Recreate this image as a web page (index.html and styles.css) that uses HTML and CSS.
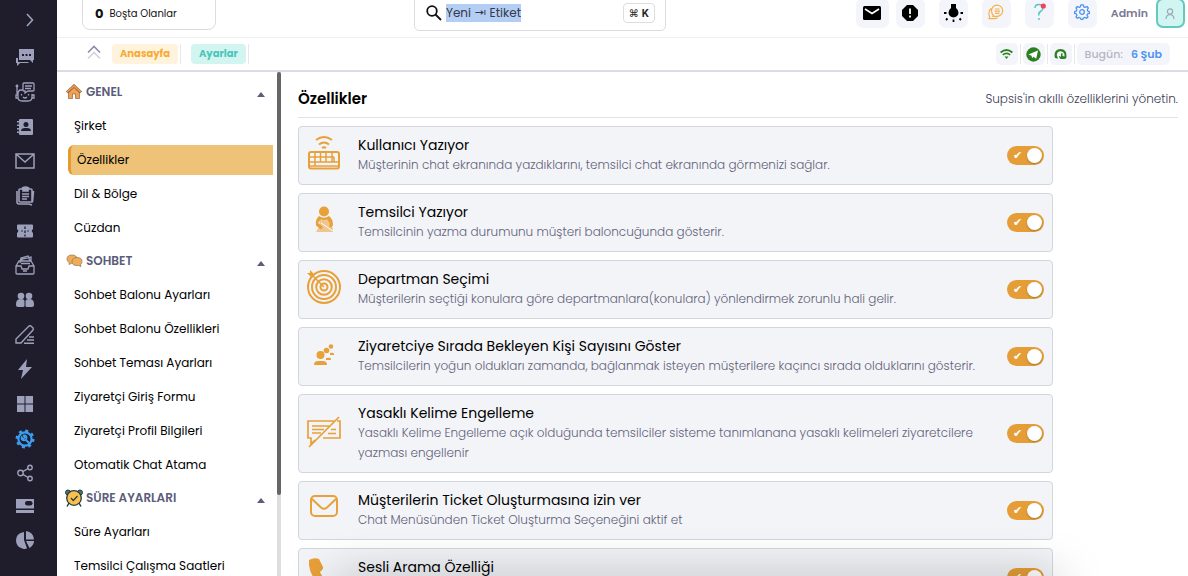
FILE: index.html
```html
<!DOCTYPE html>
<html lang="tr">
<head>
<meta charset="utf-8">
<title>Özellikler</title>
<link rel="stylesheet" href="styles.css">
</head>
<body>
<div class="app">
  <nav class="rail" aria-label="Ana menü">
    <button class="rail-toggle" aria-label="Genişlet"><svg width="10" height="14" viewBox="0 0 10 14" fill="none" stroke="currentColor" stroke-width="1.600"><path d="M2 1l5.500 6L2 13"/></svg></button>
    <a href="#" aria-label="Sohbetler"><svg viewBox="0 0 20 20"><path fill="currentColor" d="M4 2h15v11h-1v3l-3-3H4zM1 11h2v4h10l1 1H5l-3 3v-3H1z"/><path fill="#1f1d2b" d="M7 7h2v2H7zm3.500 0h2v2h-2zm3.500 0h2v2h-2z"/></svg></a>
    <a href="#" aria-label="Bot"><svg viewBox="0 0 20 20" fill="none" stroke="currentColor" stroke-width="1.300"><path d="M8 8H6q-3 0-3 4v3q0 4 4 4h6q4 0 4-4v-3M3 13H1v3h2M17 13h2v3h-2M2 12V4M9 1h9q1 0 1 1v6q0 1-1 1h-5l-3 2V9H9q-1 0-1-1V2q0-1 1-1zM10 4h7M10 6.500h6M8 15q2 2 4 0M6.500 12v1.500M13.500 12v1.500"/><circle cx="2" cy="4" r=".8"/></svg></a>
    <a href="#" aria-label="Kişiler"><svg viewBox="0 0 20 20"><path fill="currentColor" d="M5 2h12q1 0 1 1v14q0 1-1 1H5q-1 0-1-1V3q0-1 1-1zM2 4h3v1.500H2zm0 3.500h3V9H2zM2 11h3v1.500H2zm0 3.500h3V16H2z"/><circle cx="11" cy="7.500" r="2.500" fill="#1f1d2b"/><path fill="#1f1d2b" d="M6 14q0-3 4-3h2q4 0 4 3z"/></svg></a>
    <a href="#" aria-label="E-posta"><svg viewBox="0 0 20 20" fill="none" stroke="currentColor" stroke-width="1.500"><path d="M1 3h18v14H1zM1 3l9 8 9-8"/></svg></a>
    <a href="#" aria-label="Notlar"><svg viewBox="0 0 20 20" fill="none" stroke="currentColor" stroke-width="1.600"><path d="M5 3h11q1 0 1 1v12H5q-1 0-1-1V4q0-1 1-1zM7.500 3V2q3-2 6 0v1M7 8h7M7 10.500h7M7 13h5M2 5v11q0 2 2 2h10l3 1M18.500 5l-1 11"/><path fill="currentColor" d="M8 2h5v3H8z"/></svg></a>
    <a href="#" aria-label="Biletler"><svg viewBox="0 0 20 20"><path fill="currentColor" d="M3 3.500h14q1 0 1 1V8q-2.500 2 0 4v3.500q0 1-1 1H3q-1 0-1-1V12q2.500-2 0-4V4.500q0-1 1-1z"/><path stroke="#1f1d2b" stroke-width="1.300" stroke-dasharray="2.500 1.500" d="M10 5.500v10"/><path stroke="#1f1d2b" stroke-width=".8" d="M6 10h2M12 10h2"/></svg></a>
    <a href="#" aria-label="Arşiv"><svg viewBox="0 0 20 20" fill="none" stroke="currentColor" stroke-width="1.300"><path d="M1 11h5l1 3h6l1-3h5v7q0 1-1 1H2q-1 0-1-1zM1 11l3-5h12l3 5M5 8l1-5 7-2 2 5M7 6V4l9-2v4M6 8.500h9M8 16h4"/></svg></a>
    <a href="#" aria-label="Ekip"><svg viewBox="0 0 20 20" fill="currentColor"><circle cx="6" cy="6" r="3.300"/><circle cx="14" cy="6" r="3.300"/><path d="M1 14q0-5 5-5 3 0 4 2 1-2 4-2 5 0 5 5v1q0 2-2 2h-5q-1 0-2-1-1 1-2 1H3q-2 0-2-2z"/><path stroke="#1f1d2b" d="M10 10v7"/></svg></a>
    <a href="#" aria-label="Düzenle"><svg viewBox="0 0 20 20" fill="none" stroke="currentColor" stroke-width="1.400"><path d="M1 18v-4L14 1q1-.5 2 0l2 2q.500 1 0 2L6 18zM14 12h5M12 15h7M9 18.300h10"/></svg></a>
    <a href="#" aria-label="Hızlı yanıt"><svg viewBox="0 0 20 20" fill="currentColor"><path d="M12 0L3 11h5l-2 9 11-12h-6z"/></svg></a>
    <a href="#" aria-label="Uygulamalar"><svg viewBox="0 0 20 20" fill="currentColor"><path d="M2 2h7.500v7.500H2zm8.500 0H18v7.500h-7.500zM2 10.500h7.500V18H2zm8.500 0H18V18h-7.500z"/></svg></a>
    <a href="#" class="current" aria-label="Ayarlar"><svg viewBox="0 0 20 20" fill="none" stroke="currentColor"><circle cx="10" cy="10" r="6.600" stroke-width="2.200"/><circle cx="10" cy="10" r="8.300" stroke-width="2.400" stroke-dasharray="3 3.520"/><path stroke-width="2" d="M10.500 10.500l4.500 4.500"/><path stroke-width="1.600" d="M8 6.500l2 2-1.500 1.500-2-2q-.5 3 2 3.500 4 0 3-4-1-1.500-3.500-1"/></svg></a>
    <a href="#" aria-label="Paylaş"><svg viewBox="0 0 20 20" fill="none" stroke="currentColor" stroke-width="1.400"><circle cx="5.500" cy="10" r="2.700"/><circle cx="15" cy="4.500" r="2.200"/><circle cx="15" cy="15.500" r="2.200"/><path d="M7.800 8.700l5.300-3.200M7.800 11.300l5.300 3.200"/></svg></a>
    <a href="#" class="short" aria-label="Ödeme"><svg viewBox="0 0 20 20"><path fill="currentColor" d="M1 3h18v9.500H1zM1 14h18v3H1z"/><rect x="10" y="5" width="7.500" height="4.500" rx="2.200" fill="#1f1d2b"/></svg></a>
    <a href="#" aria-label="Raporlar"><svg viewBox="0 0 20 20" fill="currentColor"><path d="M9 2v8l3 8.500q-2 .8-4 .3Q1 17 1 10.500 1 3 9 2zM11 1q7.500 1 8 8.500h-8zM11 11h8q0 4-4.500 7z"/></svg></a>
  </nav>

  <div class="shell">
    <header class="topbar">
      <div class="idle"><b>0</b> Boşta Olanlar</div>
      <label class="search">
        <svg width="16" height="16" viewBox="0 0 16 16" fill="none" stroke="#111" stroke-width="1.800"><circle cx="6" cy="6" r="4.800"/><path d="M9.500 9.500l5.500 5.500"/></svg>
        <input type="text" aria-label="Ara" value="Yeni ⇥ Etiket">
        <kbd>⌘ <b>K</b></kbd>
      </label>
      <div class="tools">
        <button class="wide" aria-label="Mesajlar"><svg width="18" height="14" viewBox="0 0 18 14"><rect width="18" height="14" rx="1.500"/><path d="M2 3l7 4.500L16 3" fill="none" stroke="#fff" stroke-width="1.600"/></svg></button>
        <button aria-label="Uyarılar"><svg width="16" height="16" viewBox="0 0 16 16"><path d="M5 0h6l5 5v6l-5 5H5l-5-5V5z"/><path d="M8 3.500v5.500M8 10.500v2" stroke="#fff" stroke-width="1.800"/></svg></button>
        <button aria-label="Tema"><svg width="19" height="18" viewBox="0 0 19 18"><path d="M7 0h5v4q2.500 2 2.500 4.500a5 5 0 0 1-10 0Q4.500 6 7 4z"/><path d="M0 9h2.500M16.500 9H19M9.500 15.500V18M3.500 14.500L2 16M15.500 14.500L17 16" stroke="#000" stroke-width="1.800"/></svg></button>
        <button class="raised" aria-label="Sohbet"><svg width="16" height="16" viewBox="0 0 16 16" fill="none" stroke="#f5b04c" stroke-width="1.200" stroke-linejoin="round"><path d="M5.500 11.500Q3.500 9.500 3.500 7a5.600 5.600 0 1 1 5.600 5.300H4.800zM3 4.500Q.8 6.500.8 9.500q0 1.500.9 2.800L1 14.600h5.500q2 0 3-.8M7 5h4.500M6.500 7.200h5.500M7 9.400h4.500"/></svg></button>
        <button class="raised" aria-label="Yardım"><svg width="14" height="18" viewBox="0 0 14 18" fill="none"><path d="M3 5q0-3.500 4-3.500t4 3.500q0 2-2.500 3.500T7 12.500" stroke="#4fc9be" stroke-width="1.500"/><circle cx="7" cy="16" r="1" fill="#4fc9be"/><circle cx="11.300" cy="3" r="2.600" fill="#ef4458"/></svg></button>
        <button class="raised" aria-label="Ayarlar"><svg width="16" height="16" viewBox="0 0 16 16" fill="none" stroke="#4b94f0" stroke-width="1.300"><circle cx="8" cy="8" r="2.300"/><path stroke-linejoin="round" d="M6.800.8h2.400l.6 2 1.300.6L13 2.500 14.300 4l-1 1.800.5 1.300 1.600.5v1.800l-1.800.5-.6 1.300L14 13l-1.500 1.300-1.700-.9-1.400.6-.5 1.400H7.100L6.500 14l-1.400-.6-1.700.9L2 13l.9-1.800-.6-1.300-1.700-.5V7.600l1.700-.5.6-1.300L2 4l1.300-1.500 1.800.9 1.200-.6z"/></svg></button>
        <span class="user">Admin</span>
        <button class="avatar" aria-label="Profil"><svg width="10" height="11" viewBox="0 0 10 11" fill="none" stroke="#9aa9b5" stroke-width="1.200"><circle cx="5" cy="3.500" r="2.600"/><path d="M1 11q0-4 4-4.500 4 .5 4 4.500"/></svg></button>
      </div>
    </header>

    <div class="crumbbar">
      <button class="collapse" aria-label="Daralt"><svg width="14" height="15" viewBox="0 0 14 15" fill="none" stroke-width="1.600"><path d="M1 7.500L7 1.500l6 6" stroke="#8c8cae"/><path d="M1 13.500l6-6 6 6" stroke="#d3d3de"/></svg></button>
      <a href="#" class="crumb home">Anasayfa</a>
      <i class="sep"></i>
      <a href="#" class="crumb page">Ayarlar</a>
      <i class="sep"></i>
      <div class="status">
        <span class="chip"><svg width="13" height="10" viewBox="0 0 13 10" fill="none" stroke="#2d8022" stroke-width="1.700"><path d="M.6 3.500q5.900-5 11.800 0M2.800 5.800q3.700-3 7.400 0"/><path d="M4.500 7.500h4L6.500 10z" fill="#2d8022" stroke="none"/></svg></span>
        <i class="sep"></i>
        <span class="chip"><svg width="15" height="15" viewBox="0 0 15 15"><circle cx="7.500" cy="7.500" r="7.200" fill="#2d8022"/><path d="M2.500 7.500L12 3.500l-1.800 8.300-2.800-2-1.300 1.500-.5-2.600z" fill="#fff"/></svg></span>
        <i class="sep"></i>
        <span class="chip"><svg width="13" height="12" viewBox="0 0 13 12" fill="#2d8022"><path d="M.5 8.500Q0 1 6.500 1t6 7.500q0 2.500-2.500 2.500H6.500L4.800 8.800l1-.8 1.200 1V5.500l1.500-.2V8l2 .5Q11 3.500 6.500 3.300 3 3.500 2.800 7L4 10.500Q.7 11 .5 8.500z"/></svg></span>
        <i class="sep"></i>
        <span class="today">Bugün: <b>6 Şub</b></span>
      </div>
    </div>

    <div class="body">
      <nav class="menu" aria-label="Ayarlar menüsü">
        <section>
          <button class="group"><svg viewBox="0 0 18 16"><path d="M3.500 8L9 3l5.500 5v6.500h-4V10h-3v4.500h-4z" fill="#f2a154" stroke="#8d6148" stroke-width=".7"/><path d="M2 8.500L9 2l7 6.500" fill="none" stroke="#7b5a48" stroke-width="3"/><path d="M2 8.200L9 2l7 6.200" fill="none" stroke="#f0964a" stroke-width="1.700"/></svg>GENEL<i class="caret"></i></button>
          <a href="#">Şirket</a>
          <a href="#" class="active">Özellikler</a>
          <a href="#">Dil &amp; Bölge</a>
          <a href="#">Cüzdan</a>
        </section>
        <section>
          <button class="group"><svg viewBox="0 0 18 16" fill="#f0ac57" stroke="#8d7259" stroke-width=".7"><path d="M7 2q5 0 5 4t-5 4l-3 1.500.2-2Q2 8.500 2 6q0-4 5-4z"/><path d="M12 4.500q5 0 5 4 0 2-1.500 3l.5 2-2.500-1H12q-5 0-5-4t5-4z"/></svg>SOHBET<i class="caret"></i></button>
          <a href="#">Sohbet Balonu Ayarları</a>
          <a href="#">Sohbet Balonu Özellikleri</a>
          <a href="#">Sohbet Teması Ayarları</a>
          <a href="#">Ziyaretçi Giriş Formu</a>
          <a href="#">Ziyaretçi Profil Bilgileri</a>
          <a href="#">Otomatik Chat Atama</a>
        </section>
        <section>
          <button class="group"><svg class="clock" viewBox="0 0 18 18"><path d="M4 14l-2 3.500M14 14l2 3.500" stroke="#273b3d" stroke-width="1.500"/><circle cx="3" cy="3.500" r="2.500" fill="#4b7472" stroke="#273b3d"/><circle cx="15" cy="3.500" r="2.500" fill="#4b7472" stroke="#273b3d"/><circle cx="9" cy="9" r="7.300" fill="#f7c04f" stroke="#273b3d" stroke-width="1.300"/><path d="M6 9l2.300 2.500L12.500 7" fill="none" stroke="#273b3d" stroke-width="1.200"/></svg>SÜRE AYARLARI<i class="caret"></i></button>
          <a href="#">Süre Ayarları</a>
          <a href="#">Temsilci Çalışma Saatleri</a>
        </section>
      </nav>
      <div class="track"><div class="thumb"></div></div>

      <main class="content">
        <div class="heading"><h1>Özellikler</h1><p>Supsis'in akıllı özelliklerini yönetin.</p></div>
        <div class="cards">
          <div class="card">
            <svg viewBox="0 0 36 36" fill="none" stroke="#e8a038" stroke-width="2"><rect x="3" y="17" width="30" height="16.500" rx="2"/><path stroke-width="1.500" d="M3 22h25M3 27h25M9 17v14M14.500 17v10M20 17v10M26 17v10M28 22v5h5M3 31h30"/><path d="M10 5q8-6 16 0M13 9.500q5-4 10 0M16 13q2-1.500 4 0"/></svg>
            <div class="text"><h2 id="f1">Kullanıcı Yazıyor</h2><p>Müşterinin chat ekranında yazdıklarını, temsilci chat ekranında görmenizi sağlar.</p></div>
            <input type="checkbox" class="switch" aria-labelledby="f1" checked>
          </div>
          <div class="card">
            <svg viewBox="0 0 36 36" fill="#e8a038"><path fill="#efc68c" d="M14 17l9 0 4 10v3H10l3-5z"/><circle cx="18" cy="9.500" r="5"/><path d="M13 14q5 3.500 10 0 4 3 4 9l-2 3-2-2 1-2-3-5q-3 2-6 0l-3 4 5 4-2 2.500-5-4q-1-6 3-9.500z"/><path stroke="#fff" stroke-width="1" d="M15 21l12 8"/></svg>
            <div class="text"><h2 id="f2">Temsilci Yazıyor</h2><p>Temsilcinin yazma durumunu müşteri baloncuğunda gösterir.</p></div>
            <input type="checkbox" class="switch" aria-labelledby="f2" checked>
          </div>
          <div class="card">
            <svg viewBox="0 0 36 36" fill="none" stroke="#e8a038" stroke-width="2"><circle cx="18" cy="18" r="16"/><circle cx="18" cy="18" r="12"/><circle cx="18" cy="18" r="7.800"/><circle cx="18" cy="18" r="3.500"/><path stroke-width="1.500" d="M4 4l14 14"/><path fill="#e8a038" stroke="none" d="M1 4l3 0 0-3 4 4v3H5z"/></svg>
            <div class="text"><h2 id="f3">Departman Seçimi</h2><p>Müşterilerin seçtiği konulara göre departmanlara(konulara) yönlendirmek zorunlu hali gelir.</p></div>
            <input type="checkbox" class="switch" aria-labelledby="f3" checked>
          </div>
          <div class="card">
            <svg viewBox="0 0 36 36" fill="#e8a038"><circle cx="14.500" cy="19" r="4"/><path d="M8 29q0-4 4-4h5q4 0 4 4zM20 22q5-1 5 1v1h-5zM24 17q4-1 4 1v1h-4z"/><circle cx="20.500" cy="14.500" r="2.800"/><circle cx="25" cy="10.500" r="2.300"/></svg>
            <div class="text"><h2 id="f4">Ziyaretciye Sırada Bekleyen Kişi Sayısını Göster</h2><p>Temsilcilerin yoğun oldukları zamanda, bağlanmak isteyen müşterilere kaçıncı sırada olduklarını gösterir.</p></div>
            <input type="checkbox" class="switch" aria-labelledby="f4" checked>
          </div>
          <div class="card">
            <svg viewBox="0 0 36 36" fill="none" stroke="#e8a038" stroke-width="1.700"><path d="M28 8H2v17h3v6l4-4M31 8h3v17H17M6 13h15M6 16.500h12M6 20h9M25 16.500h5M23 13h-3M22 20.500h8M3 34L33 4"/></svg>
            <div class="text"><h2 id="f5">Yasaklı Kelime Engelleme</h2><p>Yasaklı Kelime Engelleme açık olduğunda temsilciler sisteme tanımlanana yasaklı kelimeleri ziyaretcilere yazması engellenir</p></div>
            <input type="checkbox" class="switch" aria-labelledby="f5" checked>
          </div>
          <div class="card">
            <svg viewBox="0 0 36 36" fill="none" stroke="#e8a038" stroke-width="2"><rect x="5" y="6" width="26" height="20" rx="4"/><path d="M6 9l9 8.500q3 2.500 6 0L30 9"/></svg>
            <div class="text"><h2 id="f6">Müşterilerin Ticket Oluşturmasına izin ver</h2><p>Chat Menüsünden Ticket Oluşturma Seçeneğini aktif et</p></div>
            <input type="checkbox" class="switch" aria-labelledby="f6" checked>
          </div>
          <div class="card">
            <svg viewBox="0 0 36 36" fill="#e8a038"><path d="M3 3q5-3 10-1l4 8q1 2-3 5 3 7 9 10 3-4 5-3l7 4q1 4-3 7-4 2-11-1Q5 24 3 8z"/></svg>
            <div class="text"><h2 id="f7">Sesli Arama Özelliği</h2><p>Sesli arama özelliğini aktif et</p></div>
            <input type="checkbox" class="switch" aria-labelledby="f7" checked>
          </div>
        </div>
      </main>
    </div>
  </div>
  <div class="fade"></div>
</div>
</body>
</html>
```

FILE: styles.css
```css
* { box-sizing: border-box; }
body { margin: 0; background: #fff; color: #111; font: 12px/20px Poppins, Inter, "Noto Sans", sans-serif; }
button, input { font: inherit; color: inherit; border: 0; padding: 0; background: none; }
a { color: inherit; text-decoration: none; }
h1, h2, p { margin: 0; }
svg { display: block; flex: none; }

.app { position: relative; display: flex; height: 100vh; overflow: hidden; }

.rail { flex: none; width: 57px; padding: 4px 7px 0 0; background: #1f1d2b; color: #9da0bb; display: flex; flex-direction: column; }
.rail a { display: flex; align-items: center; justify-content: center; flex: none; height: 35px; }
.rail a:nth-child(3n+2) { height: 34px; }
.rail a svg { width: 20px; height: 20px; }
.rail .current { color: #3d9ef0; }
.rail .short { height: 32px; }
.rail-toggle { display: flex; align-items: center; justify-content: center; flex: none; height: 36px; padding: 0 0 4px 9px; color: #9da0bb; }

.shell { flex: 1; min-width: 0; display: flex; flex-direction: column; }

.topbar { flex: none; display: flex; align-items: flex-end; justify-content: space-between; height: 38px; padding: 0 3px 6px 25px; border-bottom: 1px solid #efeff2; }
.idle { display: flex; align-items: center; gap: 6px; width: 134px; height: 44px; padding: 12px 12px 0; margin-bottom: 1px; border: 1px solid #dcdce0; border-radius: 8px; font-size: 10px; }
.idle b { font-size: 13px; }
.search { display: flex; align-items: center; width: 252px; height: 48px; padding: 12px 10px 0 11px; margin-left: 8px; border: 1px solid #dcdce0; border-radius: 5px; gap: 4px; }
.search input { width: 75px; height: 18px; background: #b4cdf4; color: #333a48; outline: 0; }
.search kbd { margin-left: auto; height: 20px; padding: 0 5px; border: 1px solid #dedee2; border-radius: 4px; font: 10px/18px Inter, "DejaVu Sans", sans-serif; color: #222; }
.tools { display: flex; align-items: flex-end; gap: 14px; margin-bottom: 3px; }
.tools button { display: flex; align-items: center; justify-content: center; width: 29px; height: 30px; border-radius: 7px; background: #f4f5fa; }
.tools .wide { width: 33px; margin-right: -7px; }
.tools .raised { padding-bottom: 3px; }
.user { color: #7b7a94; font-size: 11px; font-weight: 600; line-height: 30px; }
.tools .avatar { margin-left: -6px; border: 2px solid #62c9bf; background: #d1f5f1; }

.crumbbar { flex: none; display: flex; align-items: center; height: 34px; padding: 0 18px 0 30px; border-bottom: 2px solid #dadce3; }
.collapse { margin-right: 11px; padding-bottom: 4px; }
.crumb { height: 20px; padding: 0 8px; border-radius: 4px; font-size: 10px; font-weight: 700; }
.home { color: #f8ab32; background: #fff3dd; }
.page { margin-left: 8px; color: #4bc5ba; background: #d2f5f1; }
.sep { width: 1px; height: 20px; margin: 0 2px; background: #e8e8ec; }
.status { display: flex; align-items: center; margin-left: auto; }
.chip { display: flex; align-items: center; justify-content: center; width: 22px; height: 22px; border-radius: 5px; background: #f4f5fa; }
.today { height: 22px; padding: 0 8px; border-radius: 5px; background: #f4f5fa; color: #b4b5c3; font-size: 11px; font-weight: 500; line-height: 22px; }
.today b { margin-left: 5px; color: #4b94f0; font-weight: 600; }

.body { flex: 1; min-height: 0; display: flex; }
.menu { flex: none; width: 220px; padding: 4px 4px 0 8px; overflow: hidden; }
.menu section { display: flex; flex-direction: column; gap: 4px; padding-bottom: 2px; }
.menu a { height: 30px; padding: 0 6px; margin-left: 3px; line-height: 30px; color: #000; }
.menu .active { border-left: 3px solid #e59a31; border-radius: 6px 0 0 6px; background: #eec378; }
.group { display: flex; align-items: center; width: 100%; height: 31px; gap: 3px; color: #5b5d7a; font-weight: 600; }
.group svg { width: 18px; height: 16px; }
.group .clock { height: 18px; }
.caret { margin: 5px 8px 0 auto; border: solid transparent; border-width: 0 4px 5px; border-bottom-color: #5b5d7a; }
.track { flex: none; width: 4px; background: #dedede; }
.thumb { height: 84%; border-radius: 2px; background: #666; }

.content { flex: 1; min-width: 0; padding: 8px 10px 0 17px; overflow: hidden; }
.heading { display: flex; align-items: center; justify-content: space-between; height: 38px; border-bottom: 1px solid #e1e2e6; }
.heading h1 { font-size: 15px; font-weight: 600; color: #000; }
.heading p { color: #3c3c54; font-weight: 300; }
.cards { display: flex; flex-direction: column; gap: 8px; width: 85.8%; margin-top: 8px; }
.card { display: flex; align-items: center; padding: 8px 8px 9px 7px; border: 1px solid #d2d6de; border-radius: 4px; background: #f3f4f8; }
.card svg { width: 36px; height: 36px; margin-bottom: 4px; }
.text { flex: 1; margin: 0 16px; }
.text h2 { font-size: 14px; line-height: 20px; font-weight: 400; color: #000; }
.text p { color: #626279; font-weight: 300; }
.switch { appearance: none; position: relative; flex: none; width: 37px; height: 19px; margin: 0; border-radius: 10px; background: #c4c6cf; }
.switch:checked { background: #e59e37; }
.switch::before { content: "✔"; position: absolute; left: 6px; top: 0; color: #fff; font: 11px/19px "DejaVu Sans", sans-serif; }
.switch::after { content: ""; position: absolute; right: 2px; top: 2px; width: 15px; height: 15px; border-radius: 50%; background: #fff; box-shadow: 0 1px 2px rgba(0, 0, 0, .25); }

.fade { position: absolute; left: 28%; right: 11%; bottom: -24px; height: 20px; pointer-events: none; box-shadow: 0 0 48px rgba(0, 0, 0, .36); }
```
